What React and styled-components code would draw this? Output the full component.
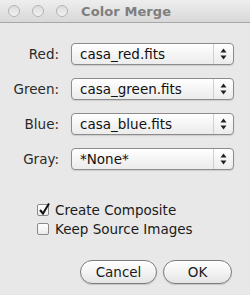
import React from 'react';
import styled, { createGlobalStyle } from 'styled-components';

const Global = createGlobalStyle`
  html, body {
    margin: 0;
    padding: 0;
    background: #e8e8e8;
  }
  body {
    font-family: "DejaVu Sans", "Liberation Sans", sans-serif;
  }
`

const Window = styled.div`
  width: 250px;
  height: 295px;
  background: #e8e8e8;
  display: flex;
  flex-direction: column;
  overflow: hidden;
`

const TitleBar = styled.div`
  height: 22px;
  flex: none;
  display: flex;
  align-items: center;
  padding-left: 8px;
  gap: 12px;
  background: linear-gradient(#eeeeee, #d8d8d8);
  border-bottom: 1px solid #a8a8a8;
`

const Light = styled.span`
  width: 12px;
  height: 12px;
  border-radius: 50%;
  border: 1px solid #b4b4b4;
  background: linear-gradient(#dcdcdc, #f2f2f2);
  box-sizing: border-box;
  flex: none;
`

const Title = styled.div`
  margin-left: 1px;
  font-size: 13px;
  font-weight: bold;
  color: #7e7e7e;
  letter-spacing: 0.1px;
`

const Fields = styled.div`
  display: grid;
  grid-template-columns: 59px 163px;
  column-gap: 12px;
  row-gap: 13px;
  align-items: center;
  padding-top: 20px;
`

const Label = styled.div`
  text-align: right;
  font-size: 13.5px;
  color: #2a2a2a;
`

const Select = styled.div`
  height: 22px;
  box-sizing: border-box;
  border: 1px solid #8c8c8c;
  border-radius: 4px;
  background: linear-gradient(#ffffff, #f4f4f4 55%, #ececec);
  box-shadow: 0 1px 1px rgba(0, 0, 0, 0.12);
  display: flex;
  align-items: center;
`

const Value = styled.div`
  flex: 1;
  padding-left: 8px;
  font-size: 13.5px;
  color: #111;
  white-space: nowrap;
`

const Stepper = styled.div`
  width: 19px;
  align-self: stretch;
  border-left: 1px solid #d0d0d0;
  display: flex;
  align-items: center;
  justify-content: center;
`

const Checks = styled.div`
  display: flex;
  flex-direction: column;
  gap: 6px;
  padding: 33px 0 0 37px;
`

const CheckRow = styled.label`
  display: flex;
  align-items: center;
  gap: 6px;
  font-size: 13.5px;
  color: #1a1a1a;
  height: 13px;
`

const Box = styled.span`
  width: 12px;
  height: 12px;
  box-sizing: border-box;
  border: 1px solid #8a8a8a;
  border-radius: 2px;
  background: linear-gradient(#ffffff, #ececec);
  position: relative;
  flex: none;
`

const Tick = styled.svg`
  position: absolute;
  left: 0px;
  top: -3px;
`

const Buttons = styled.div`
  display: flex;
  justify-content: flex-end;
  gap: 6px;
  padding: 25px 18px 0 0;
`

const Button = styled.button`
  width: ${p => p.$w}px;
  height: 24px;
  box-sizing: border-box;
  border: 1px solid #7c7c7c;
  border-radius: 12px;
  background: linear-gradient(#ffffff, #f3f3f3 50%, #e4e4e4);
  box-shadow: 0 1px 1px rgba(0, 0, 0, 0.15);
  font-family: "DejaVu Sans", "Liberation Sans", sans-serif;
  font-size: 13.5px;
  color: #1a1a1a;
  padding: 0;
`

const Arrows = () => (
  <svg width="7" height="12" viewBox="0 0 7 12">
    <path d="M3.5 0.5 L6.5 4.5 L0.5 4.5 Z" fill="#222" />
    <path d="M3.5 11.5 L6.5 7.5 L0.5 7.5 Z" fill="#222" />
  </svg>
)

const fields = [
  ['Red:', 'casa_red.fits'],
  ['Green:', 'casa_green.fits'],
  ['Blue:', 'casa_blue.fits'],
  ['Gray:', '*None*'],
]

export default function App() {
  return (
    <Window>
      <Global />
      <TitleBar>
        <Light />
        <Light />
        <Light />
        <Title>Color Merge</Title>
      </TitleBar>
      <Fields>
        {fields.map(([label, value]) => (
          <React.Fragment key={label}>
            <Label>{label}</Label>
            <Select>
              <Value>{value}</Value>
              <Stepper><Arrows /></Stepper>
            </Select>
          </React.Fragment>
        ))}
      </Fields>
      <Checks>
        <CheckRow>
          <Box>
            <Tick width="13" height="14" viewBox="0 0 13 14">
              <path d="M2 8 L5 11.5 L11 1.5" fill="none" stroke="#111" strokeWidth="2" />
            </Tick>
          </Box>
          Create Composite
        </CheckRow>
        <CheckRow>
          <Box />
          Keep Source Images
        </CheckRow>
      </Checks>
      <Buttons>
        <Button $w={77}>Cancel</Button>
        <Button $w={69}>OK</Button>
      </Buttons>
    </Window>
  );
}
